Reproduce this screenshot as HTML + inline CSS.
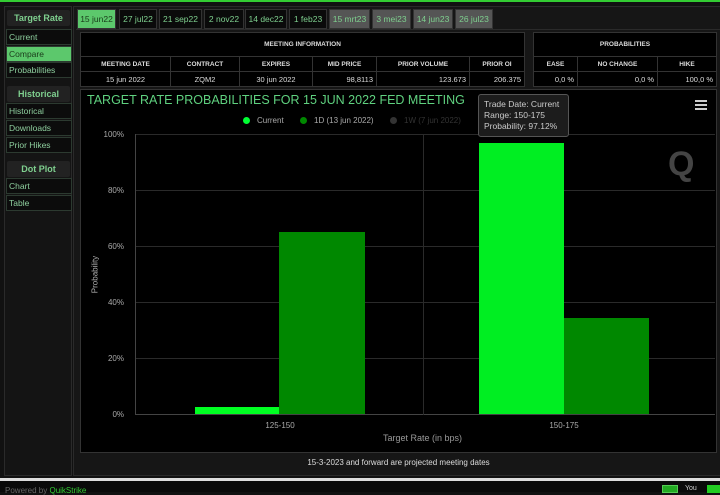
<!DOCTYPE html>
<html><head><style>
*{margin:0;padding:0;box-sizing:border-box}
body{width:720px;height:492px;background:#111;font-family:"Liberation Sans",sans-serif;position:relative;overflow:hidden;color:#ccc}
.a{position:absolute}
.sb{position:absolute;left:4px;top:6px;width:68px;height:470px;background:#141414;border:1px solid #2a2a2a}
.h{position:absolute;left:7px;width:63px;height:16px;background:#222;border-radius:2px;color:#7fd08f;font-size:9px;font-weight:bold;text-align:center;line-height:16px}
.i{position:absolute;left:6px;width:66px;height:16px;border:1px solid #2c3a30;color:#8fd09f;font-size:8.5px;line-height:14px;padding-left:2px;background:#0c0c0c}
.t{position:absolute;top:9px;height:20px;border:1px solid #333;background:#0a0a0a;color:#7fd08f;font-size:8.5px;line-height:18px;text-align:center}
table{border-collapse:collapse;position:absolute;background:#000}
td{border:1px solid #333;color:#ddd;font-size:7.5px;height:15px}
.th td{font-weight:bold;font-size:6.5px;text-align:center}
.r{text-align:right;padding-right:3px}
.grid{position:absolute;left:135px;width:580px;height:1px;background:#2a2a2a}
.yl{position:absolute;left:98px;width:26px;text-align:right;font-size:8px;color:#aaa}
</style></head><body>
<div class="a" style="left:0;top:0;width:720px;height:2px;background:#3c3"></div>
<div class="sb"></div>
<div class="h" style="top:10px">Target Rate</div>
<div class="i" style="top:29px">Current</div>
<div class="i" style="top:46px;background:#5cc86c;color:#1a3a1a">Compare</div>
<div class="i" style="top:62px">Probabilities</div>
<div class="h" style="top:86px">Historical</div>
<div class="i" style="top:103px">Historical</div>
<div class="i" style="top:120px">Downloads</div>
<div class="i" style="top:137px">Prior Hikes</div>
<div class="h" style="top:161px">Dot Plot</div>
<div class="i" style="top:178px">Chart</div>
<div class="i" style="top:195px">Table</div>

<div class="a" style="left:73px;top:6px;width:650px;height:470px;background:#161616;border:1px solid #2a2a2a"></div>
<div class="t" style="left:77px;width:39px;background:#5cc86c;color:#1a3a1a">15 jun22</div>
<div class="t" style="left:119px;width:38px">27 jul22</div>
<div class="t" style="left:159px;width:43px">21 sep22</div>
<div class="t" style="left:204px;width:40px">2 nov22</div>
<div class="t" style="left:245px;width:42px">14 dec22</div>
<div class="t" style="left:289px;width:38px">1 feb23</div>
<div class="t" style="left:329px;width:41px;background:#555">15 mrt23</div>
<div class="t" style="left:372px;width:39px;background:#555">3 mei23</div>
<div class="t" style="left:413px;width:40px;background:#555">14 jun23</div>
<div class="t" style="left:455px;width:38px;background:#555">26 jul23</div>
<div class="a" style="left:76px;top:29px;width:644px;height:1px;background:#2a2a2a"></div>

<table style="left:80px;top:32px;width:445px">
<tr class="th"><td colspan="6" style="height:24px">MEETING INFORMATION</td></tr>
<tr class="th"><td style="width:90px">MEETING DATE</td><td style="width:69px">CONTRACT</td><td style="width:73px">EXPIRES</td><td style="width:64px">MID PRICE</td><td style="width:93px">PRIOR VOLUME</td><td>PRIOR OI</td></tr>
<tr><td style="text-align:center">15 jun 2022</td><td style="text-align:center">ZQM2</td><td style="text-align:center">30 jun 2022</td><td class="r">98,8113</td><td class="r">123.673</td><td class="r">206.375</td></tr>
</table>
<table style="left:533px;top:32px;width:184px">
<tr class="th"><td colspan="3" style="height:24px">PROBABILITIES</td></tr>
<tr class="th"><td style="width:44px">EASE</td><td style="width:80px">NO CHANGE</td><td>HIKE</td></tr>
<tr><td class="r">0,0 %</td><td class="r">0,0 %</td><td class="r">100,0 %</td></tr>
</table>

<div class="a" style="left:80px;top:89px;width:637px;height:364px;background:#000;border:1px solid #333"></div>
<div class="a" style="left:87px;top:93px;font-size:12.5px;color:#5fd17f">TARGET RATE PROBABILITIES FOR 15 JUN 2022 FED MEETING</div>
<div class="a" style="left:695px;top:100px;width:12px;height:2px;background:#ccc;box-shadow:0 4px 0 #ccc,0 8px 0 #ccc"></div>
<div class="a" style="left:243px;top:117px;width:7px;height:7px;border-radius:50%;background:#0f3"></div>
<div class="a" style="left:257px;top:116px;font-size:8px;color:#aaa">Current</div>
<div class="a" style="left:300px;top:117px;width:7px;height:7px;border-radius:50%;background:#080"></div>
<div class="a" style="left:314px;top:116px;font-size:8px;color:#aaa">1D (13 jun 2022)</div>
<div class="a" style="left:390px;top:117px;width:7px;height:7px;border-radius:50%;background:#333"></div>
<div class="a" style="left:404px;top:116px;font-size:8px;color:#333">1W (7 jun 2022)</div>

<div class="grid" style="top:134px"></div><div class="grid" style="top:190px"></div><div class="grid" style="top:246px"></div><div class="grid" style="top:302px"></div><div class="grid" style="top:358px"></div><div class="grid" style="top:414px;background:#444"></div>
<div class="a" style="left:135px;top:134px;width:1px;height:281px;background:#444"></div>
<div class="a" style="left:423px;top:134px;width:1px;height:281px;background:#2a2a2a"></div>
<div class="yl" style="top:130px">100%</div><div class="yl" style="top:186px">80%</div><div class="yl" style="top:242px">60%</div><div class="yl" style="top:298px">40%</div><div class="yl" style="top:354px">20%</div><div class="yl" style="top:410px">0%</div>
<div class="a" style="left:70px;top:270px;transform:rotate(-90deg);font-size:8px;color:#aaa;width:50px;text-align:center">Probability</div>
<div class="a" style="left:668px;top:145px;font-size:34px;font-weight:bold;color:#444">Q</div>

<div class="a" style="left:195px;top:407px;width:84px;height:7px;background:#0f2"></div>
<div class="a" style="left:279px;top:232px;width:86px;height:182px;background:#080"></div>
<div class="a" style="left:479px;top:143px;width:85px;height:271px;background:#0e2"></div>
<div class="a" style="left:564px;top:318px;width:85px;height:96px;background:#080"></div>

<div class="a" style="left:478px;top:94px;width:91px;height:43px;background:#1c1c1c;border:1px solid #555;border-radius:3px;padding:4px 5px;font-size:8.5px;line-height:11px;color:#ccc">Trade Date: Current<br>Range: 150-175<br>Probability: 97.12%</div>

<div class="a" style="left:260px;top:421px;width:40px;text-align:center;font-size:8px;color:#aaa">125-150</div>
<div class="a" style="left:544px;top:421px;width:40px;text-align:center;font-size:8px;color:#aaa">150-175</div>
<div class="a" style="left:350px;top:433px;width:145px;text-align:center;font-size:9px;color:#999">Target Rate (in bps)</div>
<div class="a" style="left:80px;top:458px;width:637px;text-align:center;font-size:8px;color:#ddd">15-3-2023 and forward are projected meeting dates</div>
<div class="a" style="left:0;top:478px;width:720px;height:3px;background:#ddd"></div>
<div class="a" style="left:0;top:481px;width:720px;height:11px;background:#0a0a0a"></div>
<div class="a" style="left:5px;top:486px;font-size:8px;color:#666">Powered by <span style="color:#3c3">QuikStrike</span></div>
<div class="a" style="left:662px;top:485px;width:16px;height:8px;background:#2a2;border:1px solid #5c5"></div>
<div class="a" style="left:685px;top:485px;font-size:7px;color:#ccc">You</div>
<div class="a" style="left:707px;top:485px;width:13px;height:8px;background:#2c2"></div>
</body></html>
